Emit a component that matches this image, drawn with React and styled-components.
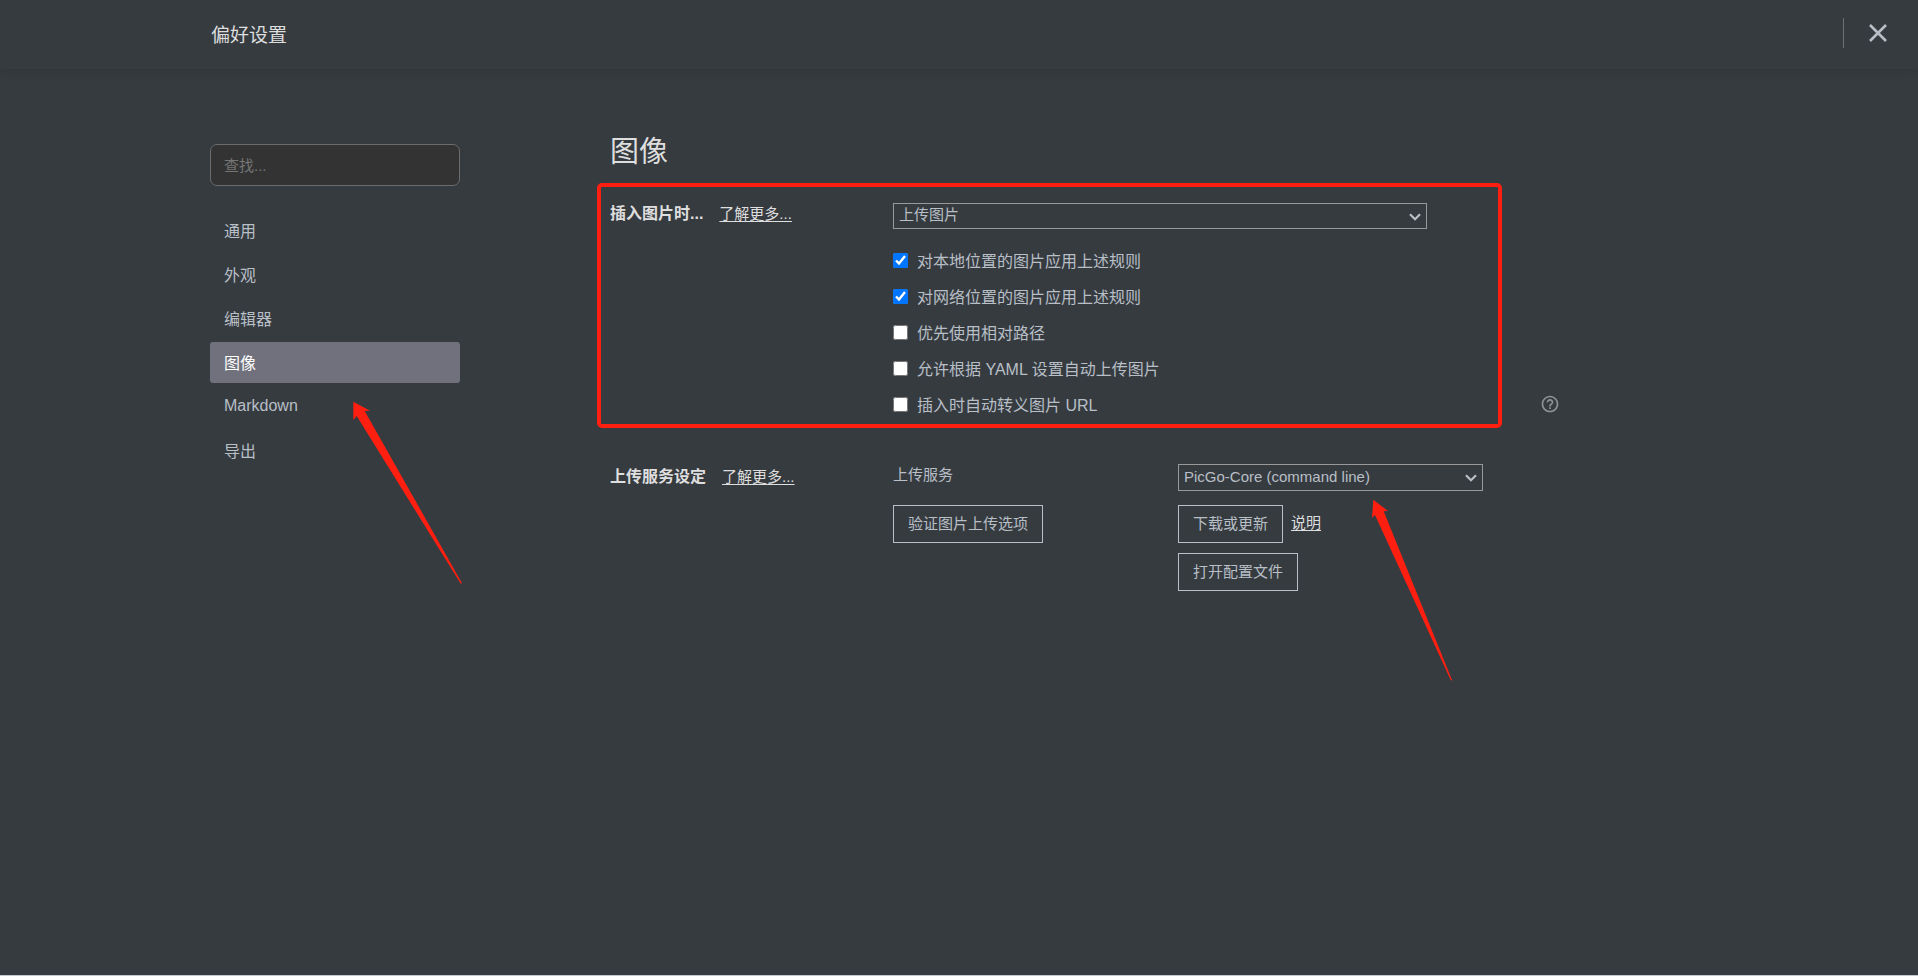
import React, { useState } from "react";
import styled, { createGlobalStyle } from "styled-components";

const colors = {
    background: "#363b40",
    text: "#b8bfc6",
    heading: "#dedede",
    active: "#70717d",
    input: "#333333",
    mark: "#ff1f11",
};

const navItems = ["通用", "外观", "编辑器", "图像", "Markdown", "导出"];

const imageRules = [
    { id: "local", label: "对本地位置的图片应用上述规则", checked: true },
    { id: "network", label: "对网络位置的图片应用上述规则", checked: true },
    { id: "relative", label: "优先使用相对路径", checked: false },
    { id: "yaml", label: "允许根据 YAML 设置自动上传图片", checked: false },
    { id: "escape", label: "插入时自动转义图片 URL", checked: false },
];

const Dropdown = ({ id, label, options, tall }) => (
    <SelectBox>
        <Select id={id} aria-label={label} $tall={tall}>
            {options.map((option) => (
                <option key={option}>{option}</option>
            ))}
        </Select>
        <Chevron viewBox="0 0 12 8" aria-hidden="true">
            <path d="M1 1.2 L6 6.2 L11 1.2" />
        </Chevron>
    </SelectBox>
);

const App = () => {
    const [active, setActive] = useState("图像");

    return (
        <Page>
            <GlobalStyle />
            <Header>
                <HeaderTitle>偏好设置</HeaderTitle>
                <CloseButton type="button" aria-label="关闭">
                    <svg width="18" height="18" viewBox="0 0 18 18">
                        <path d="M1 1 L17 17 M17 1 L1 17" />
                    </svg>
                </CloseButton>
            </Header>

            <Body>
                <Sidebar>
                    <Search type="text" placeholder="查找..." aria-label="查找" />
                    <Nav>
                        {navItems.map((item) => (
                            <NavItem
                                key={item}
                                type="button"
                                $active={item === active}
                                onClick={() => setActive(item)}
                            >
                                {item}
                            </NavItem>
                        ))}
                    </Nav>
                    <NavArrow viewBox="0 0 110 184" aria-hidden="true">
                        <path d="M0.3 0.7 L17 9.7 L11.7 9.9 L109 182.3 L107.6 182.6 L3.7 15 L0.3 19 Z" />
                    </NavArrow>
                </Sidebar>

                <Content>
                    <PanelTitle>图像</PanelTitle>

                    <Section>
                        <Highlight />
                        <SectionLabel>
                            <SectionName>插入图片时...</SectionName>
                            <Link href="#insert">了解更多...</Link>
                        </SectionLabel>
                        <Rules>
                            <Dropdown
                                id="insert-action"
                                label="插入图片时"
                                options={["上传图片"]}
                            />
                            <RuleList>
                                {imageRules.map((rule) => (
                                    <Rule key={rule.id} htmlFor={rule.id}>
                                        <Checkbox
                                            id={rule.id}
                                            type="checkbox"
                                            defaultChecked={rule.checked}
                                        />
                                        {rule.label}
                                    </Rule>
                                ))}
                            </RuleList>
                        </Rules>
                        <HelpButton type="button" aria-label="帮助">
                            <svg width="20" height="20" viewBox="0 0 24 24">
                                <path d="M11 18h2v-2h-2v2zm1-16C6.48 2 2 6.48 2 12s4.48 10 10 10 10-4.48 10-10S17.52 2 12 2zm0 18c-4.41 0-8-3.59-8-8s3.59-8 8-8 8 3.59 8 8-3.59 8-8 8zm0-14c-2.21 0-4 1.79-4 4h2c0-1.1.9-2 2-2s2 .9 2 2c0 2-3 1.75-3 5h2c0-2.25 3-2.5 3-5 0-2.21-1.79-4-4-4z" />
                            </svg>
                        </HelpButton>
                    </Section>

                    <Section>
                        <SectionLabel $tall>
                            <SectionName>上传服务设定</SectionName>
                            <Link href="#upload">了解更多...</Link>
                        </SectionLabel>
                        <Service>
                            <ServiceColumn>
                                <ServiceLabel htmlFor="service">上传服务</ServiceLabel>
                                <Button type="button">验证图片上传选项</Button>
                            </ServiceColumn>
                            <ServiceColumn>
                                <Dropdown
                                    id="service"
                                    options={["PicGo-Core (command line)"]}
                                    tall
                                />
                                <ButtonRow>
                                    <Button type="button">下载或更新</Button>
                                    <Link href="#readme">说明</Link>
                                </ButtonRow>
                                <Button type="button">打开配置文件</Button>
                                <ServiceArrow viewBox="0 0 81 182" aria-hidden="true">
                                    <path d="M1.3 0.7 L16 12 L11.7 12.3 L80 181 L79 181.7 L3 16 L0 18.7 Z" />
                                </ServiceArrow>
                            </ServiceColumn>
                        </Service>
                    </Section>
                </Content>
            </Body>
        </Page>
    );
};

export default App;

const GlobalStyle = createGlobalStyle`
    * {
        box-sizing: border-box;
    }
    body {
        margin: 0;
        background-color: ${colors.background};
    }
    body, button, input, select {
        font-family: "Liberation Sans", "Noto Sans CJK SC", sans-serif;
    }
`;

const Page = styled.div`
    min-height: 100vh;
    color: ${colors.text};
    border-bottom: 1px solid #c5cad0;
`;

const Header = styled.header`
    display: flex;
    align-items: center;
    justify-content: space-between;
    height: 69px;
    padding: 0 24px 3px max(24px, calc((100% - 1496px) / 2));
    box-shadow: 0 2px 10px rgba(0, 0, 0, 0.1);
`;

const HeaderTitle = styled.h1`
    margin: 0;
    color: ${colors.heading};
    font-size: 19px;
    font-weight: 400;
`;

const CloseButton = styled.button`
    display: flex;
    align-items: center;
    height: 30px;
    padding: 0 7px 0 25px;
    border: 0;
    border-left: 1px solid #6d7175;
    background: none;
    cursor: pointer;

    path {
        stroke: ${colors.text};
        stroke-width: 2.6;
    }
`;

const Body = styled.div`
    display: flex;
    gap: 150px;
    max-width: 1498px;
    margin: 0 auto;
    padding-top: 60px;
`;

const Sidebar = styled.aside`
    position: relative;
    flex: 0 0 250px;
    padding-top: 15px;
`;

const Search = styled.input`
    display: block;
    width: 100%;
    height: 42px;
    padding: 0 13px;
    color: ${colors.text};
    font-size: 15px;
    background-color: ${colors.input};
    border: 1px solid #6c6c6c;
    border-radius: 7px;

    &::placeholder {
        color: #757575;
    }
`;

const Nav = styled.nav`
    display: flex;
    flex-direction: column;
    gap: 3px;
    margin-top: 24px;
`;

const NavItem = styled.button`
    height: 41px;
    padding: 0 14px 2px;
    color: ${(props) => (props.$active ? "#ffffff" : colors.text)};
    font-size: 16px;
    text-align: left;
    background-color: ${(props) => (props.$active ? colors.active : "transparent")};
    border: 0;
    border-radius: 3px;
    cursor: pointer;
`;

const NavArrow = styled.svg`
    position: absolute;
    top: 272px;
    left: 143px;
    width: 110px;
    height: 184px;
    fill: ${colors.mark};
    pointer-events: none;
`;

const Content = styled.main`
    flex: 0 1 948px;
`;

const PanelTitle = styled.h2`
    margin: 0;
    color: ${colors.heading};
    font-size: 29px;
    font-weight: 400;
    line-height: 46px;
`;

const Section = styled.section`
    position: relative;
    display: flex;
    padding-top: 28px;
    margin-bottom: 18px;
`;

const Highlight = styled.div`
    position: absolute;
    top: 8px;
    left: -13px;
    right: 56px;
    bottom: -10px;
    border: 4px solid ${colors.mark};
    border-radius: 5px;
    pointer-events: none;
`;

const SectionLabel = styled.div`
    display: flex;
    align-items: baseline;
    gap: 16px;
    flex: 0 0 283px;
    height: 24px;
    color: ${colors.heading};
    line-height: ${(props) => (props.$tall ? "26px" : "22px")};
`;

const SectionName = styled.h3`
    margin: 0;
    font-size: 16px;
`;

const Link = styled.a`
    color: ${colors.heading};
    font-size: 15px;
    text-underline-offset: 2px;
`;

const Rules = styled.div`
    flex: 0 1 534px;
`;

const SelectBox = styled.div`
    position: relative;
`;

const Select = styled.select`
    display: block;
    width: 100%;
    height: ${(props) => (props.$tall ? "27px" : "26px")};
    padding: 0 24px 3px 5px;
    color: ${colors.text};
    font-size: 15px;
    background-color: transparent;
    border: 1px solid #999999;
    border-radius: 0;
    appearance: none;
`;

const Chevron = styled.svg`
    position: absolute;
    top: 10px;
    right: 6px;
    width: 12px;
    height: 8px;
    fill: none;
    stroke: ${colors.text};
    stroke-width: 2.2;
    pointer-events: none;
`;

const RuleList = styled.div`
    display: flex;
    flex-direction: column;
    gap: 12px;
    margin-top: 21px;
`;

const Rule = styled.label`
    display: flex;
    align-items: center;
    gap: 9px;
    font-size: 16px;
    line-height: 24px;
`;

const Checkbox = styled.input`
    width: 15px;
    height: 15px;
    margin: 0 0 4px;
`;

const HelpButton = styled.button`
    display: flex;
    align-self: flex-end;
    margin: 0 -2px 4px auto;
    padding: 0;
    border: 0;
    background: none;
    cursor: pointer;

    path {
        fill: #8f9295;
    }
`;

const Service = styled.div`
    display: grid;
    grid-template-columns: 285px 305px;
`;

const ServiceColumn = styled.div`
    position: relative;
    display: flex;
    flex-direction: column;
    align-items: flex-start;

    ${SelectBox} {
        width: 100%;
    }
`;

const ServiceLabel = styled.label`
    height: 41px;
    font-size: 15px;
    line-height: 22px;
`;

const Button = styled.button`
    height: 38px;
    padding: 0 14px 3px;
    color: ${colors.text};
    font-size: 15px;
    background-color: transparent;
    border: 1px solid ${colors.text};
    cursor: pointer;
`;

const ButtonRow = styled.div`
    display: flex;
    align-items: center;
    gap: 8px;
    margin: 14px 0 10px;
    line-height: 20px;

    ${Link} {
        padding-bottom: 2px;
    }
`;

const ServiceArrow = styled.svg`
    position: absolute;
    top: 35px;
    left: 194px;
    width: 81px;
    height: 182px;
    fill: ${colors.mark};
    pointer-events: none;
`;
